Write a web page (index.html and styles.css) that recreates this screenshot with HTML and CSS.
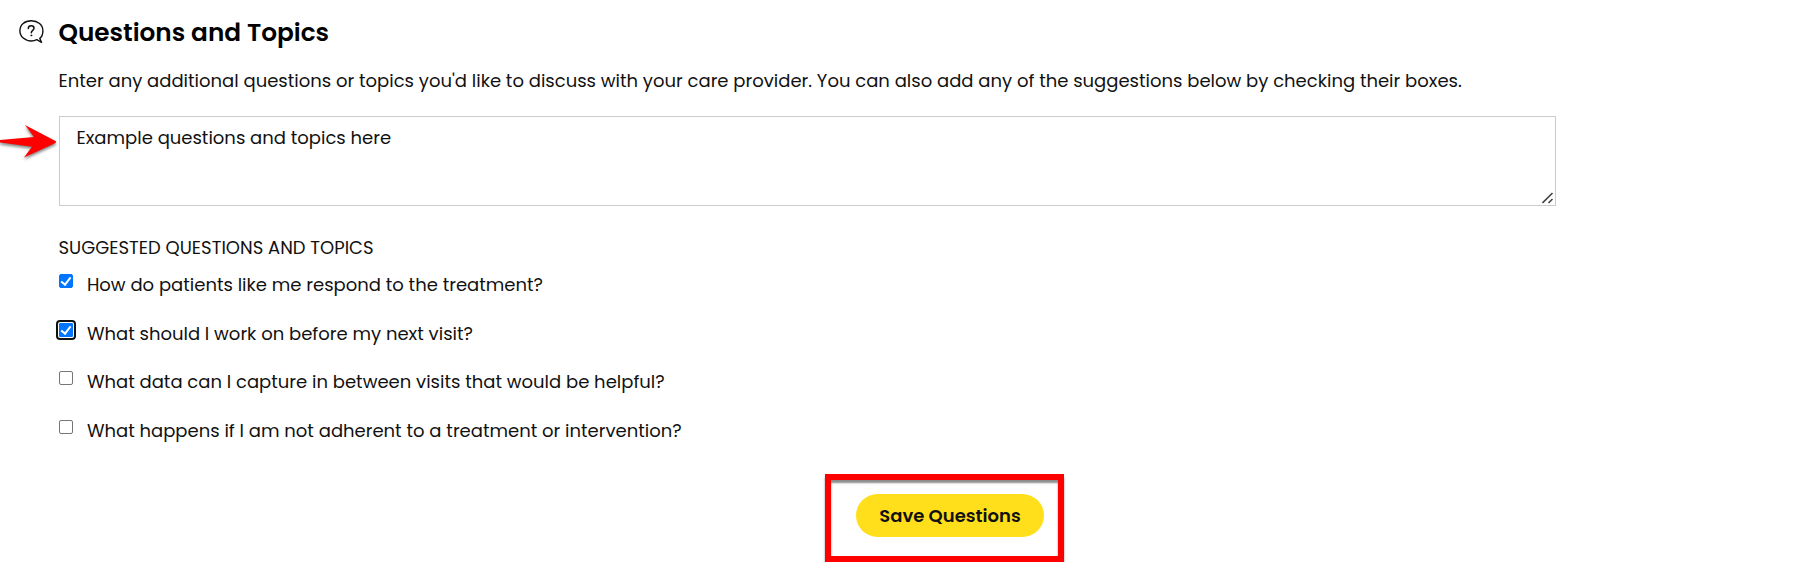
FILE: index.html
```html
<!DOCTYPE html>
<html lang="en">
<head>
  <meta charset="UTF-8">
  <meta name="viewport" content="width=device-width, initial-scale=1.0">
  <title>Questions and Topics</title>
  <link rel="stylesheet" href="styles.css">
</head>
<body>
  <section class="questions">
    <svg class="section-icon" width="26" height="26" viewBox="0 0 26 26" fill="none" stroke="#111" stroke-width="1.4" stroke-linecap="round" stroke-linejoin="round">
      <path d="M20.800 19.400C23.100 17.600 23.900 14.800 23.900 11.700C23.900 5.700 18.800 1.800 12.300 1.800S0.900 5.700 0.900 11.700S6 22 12.300 22C14.400 22 16.200 21.500 17.800 20.700L22.500 23.300Z"/>
      <path stroke-width="1.500" d="M9.300 9.400C9.300 7.700 10.500 6.800 12.200 6.800S15 7.700 15 9.300C15 11.200 12.300 11.500 12.300 13.700"/>
      <circle cx="12.300" cy="16.400" r="0.600" fill="#111" stroke-width="0.600"/>
    </svg>

    <div class="content">
      <h2 class="title">Questions and Topics</h2>
      <p class="intro">Enter any additional questions or topics you'd like to discuss with your care provider. You can also add any of the suggestions below by checking their boxes.</p>

      <div class="field">
        <textarea class="notes">Example questions and topics here</textarea>
        <svg class="grip" width="12" height="12" viewBox="0 0 12 12" stroke="#444" stroke-width="1.6">
          <path d="M0.500 11L10.500 1M6.500 11L10.500 7"/>
        </svg>
        <svg class="arrow" width="60" height="40" viewBox="0 0 60 40">
          <path fill="#f00" d="M0 15L34 12L25 0L55.500 16Q56.500 17 55.500 18L24 32.500L32 21.700L0 17.500Z"/>
        </svg>
      </div>

      <h3 class="subtitle">SUGGESTED QUESTIONS AND TOPICS</h3>
      <ul class="options">
        <li><label class="option"><input type="checkbox" checked><span>How do patients like me respond to the treatment?</span></label></li>
        <li><label class="option"><input type="checkbox" class="focused" checked><span>What should I work on before my next visit?</span></label></li>
        <li><label class="option"><input type="checkbox"><span>What data can I capture in between visits that would be helpful?</span></label></li>
        <li><label class="option"><input type="checkbox"><span>What happens if I am not adherent to a treatment or intervention?</span></label></li>
      </ul>
    </div>
  </section>

  <div class="actions">
    <div class="highlight">
      <button class="save">Save Questions</button>
    </div>
  </div>
</body>
</html>
```
FILE: styles.css
```css
*,
*::after {
  box-sizing: border-box;
}

body {
  margin: 0;
  background: #fff;
  color: #111;
  font-family: Poppins, Inter, sans-serif;
  font-size: 18px;
  line-height: 28px;
}

.questions {
  display: flex;
  gap: 13.5px;
  padding: 15px 0 0 19px;
}

.section-icon {
  flex: none;
  margin-top: 4px;
}

.content {
  width: 1497px;
}

.title {
  margin: 0;
  font-size: 24.75px;
  font-weight: 600;
  line-height: 36px;
  color: #000;
}

.intro {
  margin: 16px 0 21px;
  white-space: nowrap;
}

.field {
  position: relative;
  height: 90px;
}

.notes {
  display: block;
  width: 100%;
  height: 90px;
  padding: 7px 17px;
  border: 1px solid #ccc;
  border-radius: 0;
  outline: none;
  resize: none;
  overflow: hidden;
  color: inherit;
  font: inherit;
}

.grip {
  position: absolute;
  right: 2px;
  bottom: 2px;
}

.arrow {
  position: absolute;
  left: -58.5px;
  top: 9px;
  overflow: visible;
  filter: drop-shadow(0 2px 1.5px rgba(0, 0, 0, 0.5));
}

.subtitle {
  margin: 28px 0 9px;
  font-size: 18px;
  font-weight: 400;
}

.options {
  display: flex;
  flex-direction: column;
  gap: 20.7px;
  margin: 0;
  padding: 0;
  list-style: none;
}

.option {
  display: flex;
  gap: 14.4px;
  white-space: nowrap;
}

.option input {
  appearance: none;
  flex: none;
  width: 14px;
  height: 14px;
  margin: 3px 0 0;
  border: 1px solid #767676;
  border-radius: 2px;
  background: #fff;
}

.option input:checked {
  position: relative;
  border-color: #0075ff;
  background: #0075ff;
}

.option input:checked::after {
  content: "";
  position: absolute;
  left: 3.5px;
  top: 0;
  width: 5.5px;
  height: 10px;
  border: solid #fff;
  border-width: 0 2px 2px 0;
  transform: rotate(38deg);
}

.option .focused {
  border-radius: 1px;
  outline: 2px solid #101010;
  outline-offset: 1px;
}

.actions {
  display: flex;
  padding: 29px 0 0 825px;
}

.highlight {
  display: flex;
  justify-content: center;
  align-items: flex-start;
  width: 239px;
  height: 88px;
  padding: 14px 0 0 11px;
  border: 6px solid #f00;
  box-shadow: 0 3px 2px rgba(0, 0, 0, 0.45), inset 0 3px 2px rgba(0, 0, 0, 0.45);
}

.save {
  width: 188px;
  height: 43px;
  padding: 0;
  border: 0;
  border-radius: 22px;
  background: #ffdf1b;
  color: #111;
  font: inherit;
  font-weight: 600;
}
```
